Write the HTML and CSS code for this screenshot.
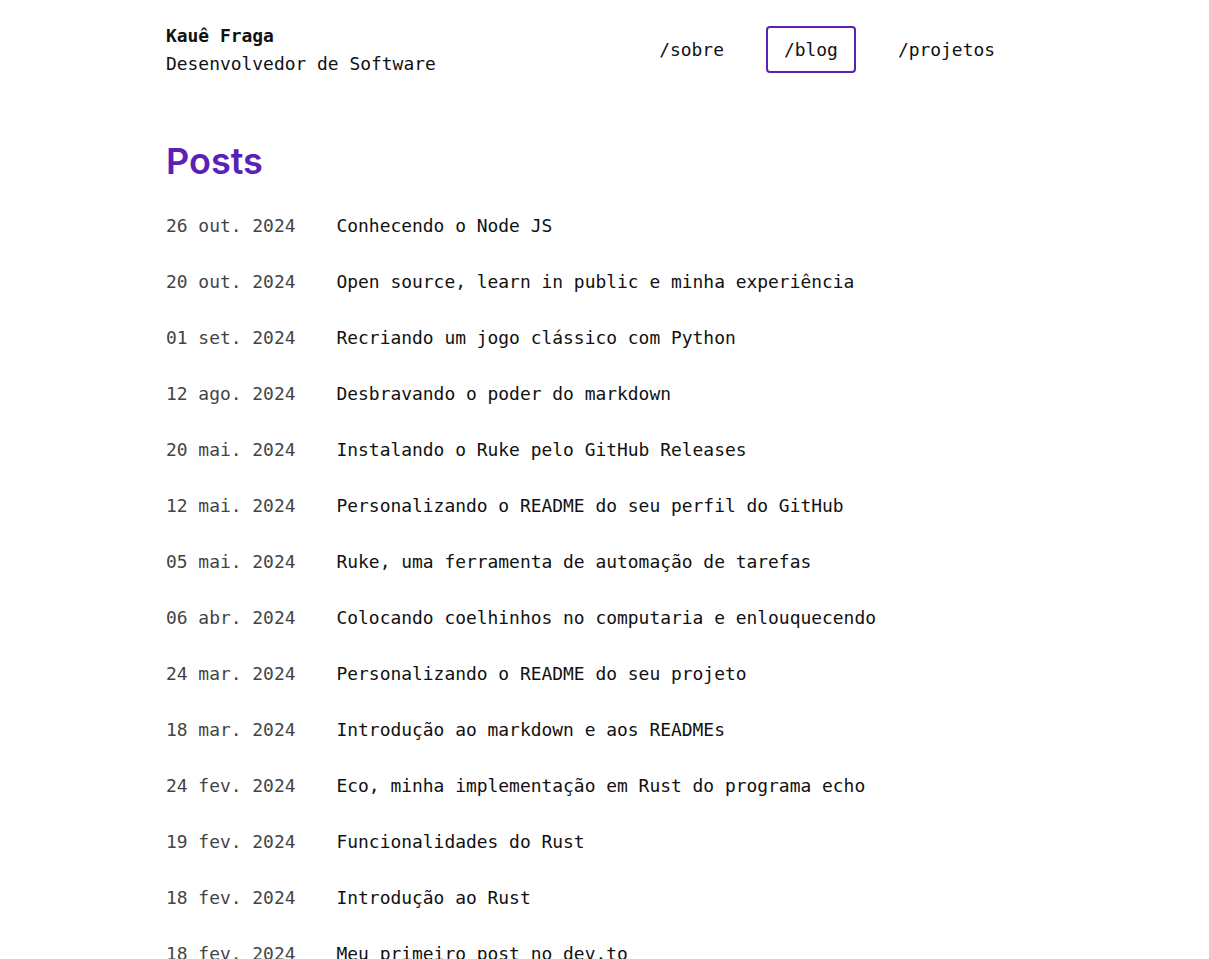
FILE: index.html
```html
<!DOCTYPE html>
<html lang="pt-BR">
<head>
<meta charset="utf-8">
<title>Kauê Fraga - Blog</title>
<link rel="stylesheet" href="styles.css">
</head>
<body>
<div class="page">
  <header class="header">
    <div class="brand">
      <div class="name">Kauê Fraga</div>
      <div class="role">Desenvolvedor de Software</div>
    </div>
    <nav class="nav">
      <a class="nav-link" href="#">/sobre</a>
      <a class="nav-link active" href="#">/blog</a>
      <a class="nav-link" href="#">/projetos</a>
    </nav>
  </header>
  <main class="main">
    <h1 class="title">Posts</h1>
    <ul class="posts">
      <li class="post"><span class="date">26 out. 2024</span><a class="post-title" href="#">Conhecendo o Node JS</a></li>
      <li class="post"><span class="date">20 out. 2024</span><a class="post-title" href="#">Open source, learn in public e minha experiência</a></li>
      <li class="post"><span class="date">01 set. 2024</span><a class="post-title" href="#">Recriando um jogo clássico com Python</a></li>
      <li class="post"><span class="date">12 ago. 2024</span><a class="post-title" href="#">Desbravando o poder do markdown</a></li>
      <li class="post"><span class="date">20 mai. 2024</span><a class="post-title" href="#">Instalando o Ruke pelo GitHub Releases</a></li>
      <li class="post"><span class="date">12 mai. 2024</span><a class="post-title" href="#">Personalizando o README do seu perfil do GitHub</a></li>
      <li class="post"><span class="date">05 mai. 2024</span><a class="post-title" href="#">Ruke, uma ferramenta de automação de tarefas</a></li>
      <li class="post"><span class="date">06 abr. 2024</span><a class="post-title" href="#">Colocando coelhinhos no computaria e enlouquecendo</a></li>
      <li class="post"><span class="date">24 mar. 2024</span><a class="post-title" href="#">Personalizando o README do seu projeto</a></li>
      <li class="post"><span class="date">18 mar. 2024</span><a class="post-title" href="#">Introdução ao markdown e aos READMEs</a></li>
      <li class="post"><span class="date">24 fev. 2024</span><a class="post-title" href="#">Eco, minha implementação em Rust do programa echo</a></li>
      <li class="post"><span class="date">19 fev. 2024</span><a class="post-title" href="#">Funcionalidades do Rust</a></li>
      <li class="post"><span class="date">18 fev. 2024</span><a class="post-title" href="#">Introdução ao Rust</a></li>
      <li class="post"><span class="date">18 fev. 2024</span><a class="post-title" href="#">Meu primeiro post no dev.to</a></li>
    </ul>
  </main>
</div>
</body>
</html>
```
FILE: styles.css
```css
html, body {
  margin: 0;
  padding: 0;
  background: #ffffff;
}
body {
  font-family: "DejaVu Sans Mono", "Liberation Mono", monospace;
  font-size: 17.93px;
  line-height: 28px;
  color: #111111;
  overflow: hidden;
}
.page {
  width: 877px;
  margin: 0 auto;
}
.header {
  display: flex;
  justify-content: space-between;
  align-items: center;
  padding-top: 22px;
}
.name {
  font-weight: bold;
}
.nav {
  display: flex;
  gap: 24px;
  margin-right: 30px;
  margin-top: -1px;
}
.nav-link {
  color: #111111;
  text-decoration: none;
  padding: 8px 16px;
  border: 2px solid transparent;
  border-radius: 4px;
  line-height: 27px;
}
.nav-link.active {
  border-color: #5b21b6;
}
.main {
  padding-top: 63px;
}
.title {
  margin: 0;
  font-family: Inter, "Noto Sans", sans-serif;
  font-size: 36px;
  line-height: 40px;
  font-weight: 600;
  color: #5b21b6;
}
.posts {
  list-style: none;
  margin: 31px 0 0;
  padding: 0;
  display: flex;
  flex-direction: column;
  gap: 28px;
}
.post {
  display: flex;
}
.date {
  color: #444444;
  margin-right: 41px;
  white-space: nowrap;
}
.post-title {
  color: #111111;
  text-decoration: none;
}
```
